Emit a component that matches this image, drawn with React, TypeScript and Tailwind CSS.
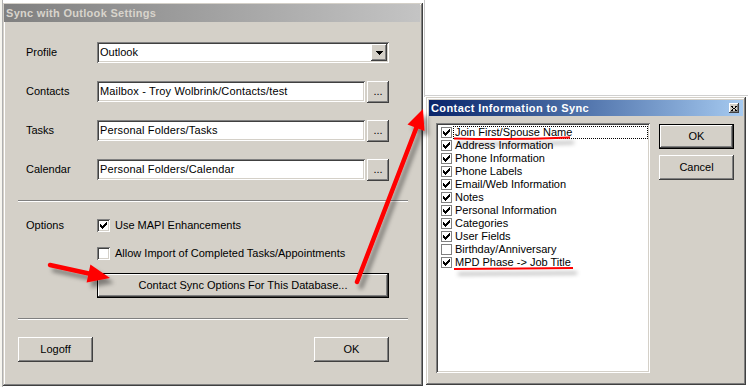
import React from "react";

const FONT = "font-['Liberation_Sans',Arial,sans-serif]";
const winFrame =
  "shadow-[inset_-1px_-1px_#404040,inset_1px_1px_#d4d0c8,inset_-2px_-2px_#808080,inset_2px_2px_#ffffff]";
const raised =
  "shadow-[inset_-1px_-1px_#404040,inset_1px_1px_#ffffff,inset_-2px_-2px_#808080,inset_2px_2px_#d4d0c8]";
const sunken =
  "shadow-[inset_1px_1px_#808080,inset_-1px_-1px_#ffffff,inset_2px_2px_#404040,inset_-2px_-2px_#d4d0c8]";
const defBtn =
  "shadow-[inset_0_0_0_1px_#000000,inset_-2px_-2px_#404040,inset_2px_2px_#ffffff,inset_-3px_-3px_#808080]";

function Check() {
  return (
    <svg width="7" height="7" viewBox="0 0 7 7" shapeRendering="crispEdges">
      <path
        fill="#000"
        d="M6 0h1v1h-1z M5 1h2v1h-2z M0 2h1v1h-1z M4 2h3v1h-3z M0 3h2v1h-2z M3 3h3v1h-3z M0 4h5v1h-5z M1 5h3v1h-3z M2 6h1v1h-1z"
      />
    </svg>
  );
}

function Checkbox({ checked }: { checked: boolean }) {
  return (
    <div className={`w-[13px] h-[13px] bg-white flex items-center justify-center ${sunken}`}>
      {checked && <Check />}
    </div>
  );
}

function Field({ text, width }: { text: string; width: string }) {
  return (
    <div className={`${width} h-[21px] bg-white flex items-center pl-[3px] ${sunken}`}>
      <span className="whitespace-nowrap tracking-[0.15px]">{text}</span>
    </div>
  );
}

function Row({ label, children }: { label: string; children: React.ReactNode }) {
  return (
    <div className="flex items-center h-[21px] pl-[8px]">
      <div className="w-[71px]">{label}</div>
      {children}
    </div>
  );
}

function DotsButton() {
  return (
    <div className={`ml-[2px] w-[22px] h-[22px] bg-[#d4d0c8] flex items-center justify-center ${raised}`}>
      ...
    </div>
  );
}

function Separator() {
  return <div className="w-[390px] h-[2px] border-t border-b border-t-[#808080] border-b-white" />;
}

function MainDialog() {
  return (
    <div className={`absolute left-[3px] top-[3px] w-[420px] h-[383px] bg-[#d4d0c8] pt-px pl-px pr-[3px] ${winFrame}`}>
      <div className="h-[18px] flex items-center pl-[2px] bg-linear-to-r from-[#808080] to-[#c4c4c4] text-[#d8d4cc] font-bold text-[11px] tracking-[0.3px]">
        Sync with Outlook Settings
      </div>
      <div className="pl-[14px] pt-[20px] flex flex-col">
        <div className="flex flex-col gap-[18px]">
          <Row label="Profile">
            <div className={`w-[292px] h-[21px] bg-white flex p-[2px] ${sunken}`}>
              <div className="flex-1 flex items-center pl-px">Outlook</div>
              <div className={`w-[16px] h-full bg-[#d4d0c8] flex items-center justify-center ${raised}`}>
                <svg width="7" height="4" viewBox="0 0 7 4" shapeRendering="crispEdges">
                  <path d="M0 0h7v1h-7z M1 1h5v1h-5z M2 2h3v1h-3z M3 3h1v1h-1z" fill="#000" />
                </svg>
              </div>
            </div>
          </Row>
          <Row label="Contacts">
            <Field text="Mailbox - Troy Wolbrink/Contacts/test" width="w-[268px]" />
            <DotsButton />
          </Row>
          <Row label="Tasks">
            <Field text="Personal Folders/Tasks" width="w-[268px]" />
            <DotsButton />
          </Row>
          <Row label="Calendar">
            <Field text="Personal Folders/Calendar" width="w-[268px]" />
            <DotsButton />
          </Row>
        </div>
        <div className="mt-[20px]">
          <Separator />
        </div>
        <div className="mt-[17px] flex pl-[8px]">
          <div className="w-[71px] h-[13px] flex items-center">Options</div>
          <div className="flex flex-col gap-[15px]">
            <div className="flex items-center gap-[5px] h-[13px]">
              <Checkbox checked />
              <span>Use MAPI Enhancements</span>
            </div>
            <div className="flex items-center gap-[5px] h-[13px]">
              <Checkbox checked={false} />
              <span>Allow Import of Completed Tasks/Appointments</span>
            </div>
          </div>
        </div>
        <div className={`mt-[13px] ml-[79px] w-[292px] h-[25px] bg-[#d4d0c8] flex items-center justify-center ${defBtn}`}>
          Contact Sync Options For This Database...
        </div>
        <div className="mt-[20px]">
          <Separator />
        </div>
        <div className="mt-[17px] w-[371px] flex justify-between">
          <div className={`w-[75px] h-[25px] bg-[#d4d0c8] flex items-center justify-center ${raised}`}>Logoff</div>
          <div className={`w-[75px] h-[25px] bg-[#d4d0c8] flex items-center justify-center ${raised}`}>OK</div>
        </div>
      </div>
    </div>
  );
}

const items: [string, boolean][] = [
  ["Join First/Spouse Name", true],
  ["Address Information", true],
  ["Phone Information", true],
  ["Phone Labels", true],
  ["Email/Web Information", true],
  ["Notes", true],
  ["Personal Information", true],
  ["Categories", true],
  ["User Fields", true],
  ["Birthday/Anniversary", false],
  ["MPD Phase -> Job Title", true],
];

function ContactDialog() {
  return (
    <div className={`absolute left-[426px] top-[97px] w-[320px] h-[288px] bg-[#d4d0c8] p-[3px] ${winFrame}`}>
      <div className="h-[16px] flex items-center justify-between pl-[2px] pr-[4px] bg-linear-to-r from-[#0a246a] to-[#a6caf0] text-white font-bold text-[11px]">
        <span className="tracking-[0.4px]">Contact Information to Sync</span>
        <div className={`w-[10px] h-[10px] bg-[#d4d0c8] flex items-center justify-center ${raised}`}>
          <svg width="6" height="5" viewBox="0 0 6 5" shapeRendering="crispEdges">
            <path d="M0 0h2v1h-2z M4 0h2v1h-2z M1 1h1v1h-1z M4 1h1v1h-1z M2 2h2v1h-2z M1 3h1v1h-1z M4 3h1v1h-1z M0 4h2v1h-2z M4 4h2v1h-2z" fill="#000" />
          </svg>
        </div>
      </div>
      <div className="flex mt-[7px] pl-[7px] gap-[9px]">
        <div className={`w-[214px] h-[250px] bg-white p-[2px] ${sunken}`}>
          <div className="pt-px flex flex-col">
            {items.map(([label, checked], i) => (
              <div key={label} className="relative h-[13px] flex items-center pl-[3px] gap-[3px]">
                <div className="w-[11px] h-[11px] border border-[#808080] bg-white flex items-center justify-center">
                  {checked && <Check />}
                </div>
                <span className="whitespace-nowrap leading-[13px]">{label}</span>
                {i === 0 && (
                  <div className="absolute left-[15px] right-0 top-0 bottom-0 border border-dotted border-black" />
                )}
              </div>
            ))}
          </div>
        </div>
        <div className="flex flex-col gap-[6px] mt-px">
          <div className={`w-[75px] h-[25px] bg-[#d4d0c8] flex items-center justify-center ${defBtn}`}>OK</div>
          <div className={`w-[75px] h-[25px] bg-[#d4d0c8] flex items-center justify-center ${raised}`}>Cancel</div>
        </div>
      </div>
    </div>
  );
}

function Overlay() {
  return (
    <svg className="absolute inset-0 pointer-events-none" width="748" height="387" viewBox="0 0 748 387">
      <defs>
        <filter id="sh" x="-10%" y="-10%" width="130%" height="130%">
          <feDropShadow dx="4" dy="5" stdDeviation="2.2" floodColor="#000" floodOpacity="0.4" />
        </filter>
      </defs>
      <g filter="url(#sh)">
        <line x1="50" y1="265" x2="91" y2="274" stroke="#ff0000" strokeWidth="4.5" strokeLinecap="round" />
        <polygon points="110,278 86.6,282.5 90.4,264.5" fill="#ff0000" />
        <line x1="357" y1="282" x2="417" y2="126" stroke="#ff0000" strokeWidth="4.5" strokeLinecap="round" />
        <polygon points="423,109 424.5,131 407.5,124.5" fill="#ff0000" />
        <path d="M454 138.5 Q 512 140 570 137.5" stroke="#ff0000" strokeWidth="2" fill="none" />
        <path d="M454 269 Q 515 268.5 573 268" stroke="#ff0000" strokeWidth="2" fill="none" />
      </g>
    </svg>
  );
}

export default function App() {
  return (
    <div className={`relative w-[748px] h-[387px] overflow-hidden bg-white text-[11px] text-black ${FONT}`}>
      <div className="absolute left-0 top-0 w-[3px] h-full bg-[#f6f5ef] border-r border-[#b0b0b0]" />
      <div className="absolute left-[424px] top-0 w-px h-[97px] bg-[#c8c8c8]" />
      <div className="absolute left-[424px] top-[95px] w-[324px] h-px bg-[#d0d0d0]" />
      <MainDialog />
      <ContactDialog />
      <Overlay />
    </div>
  );
}
